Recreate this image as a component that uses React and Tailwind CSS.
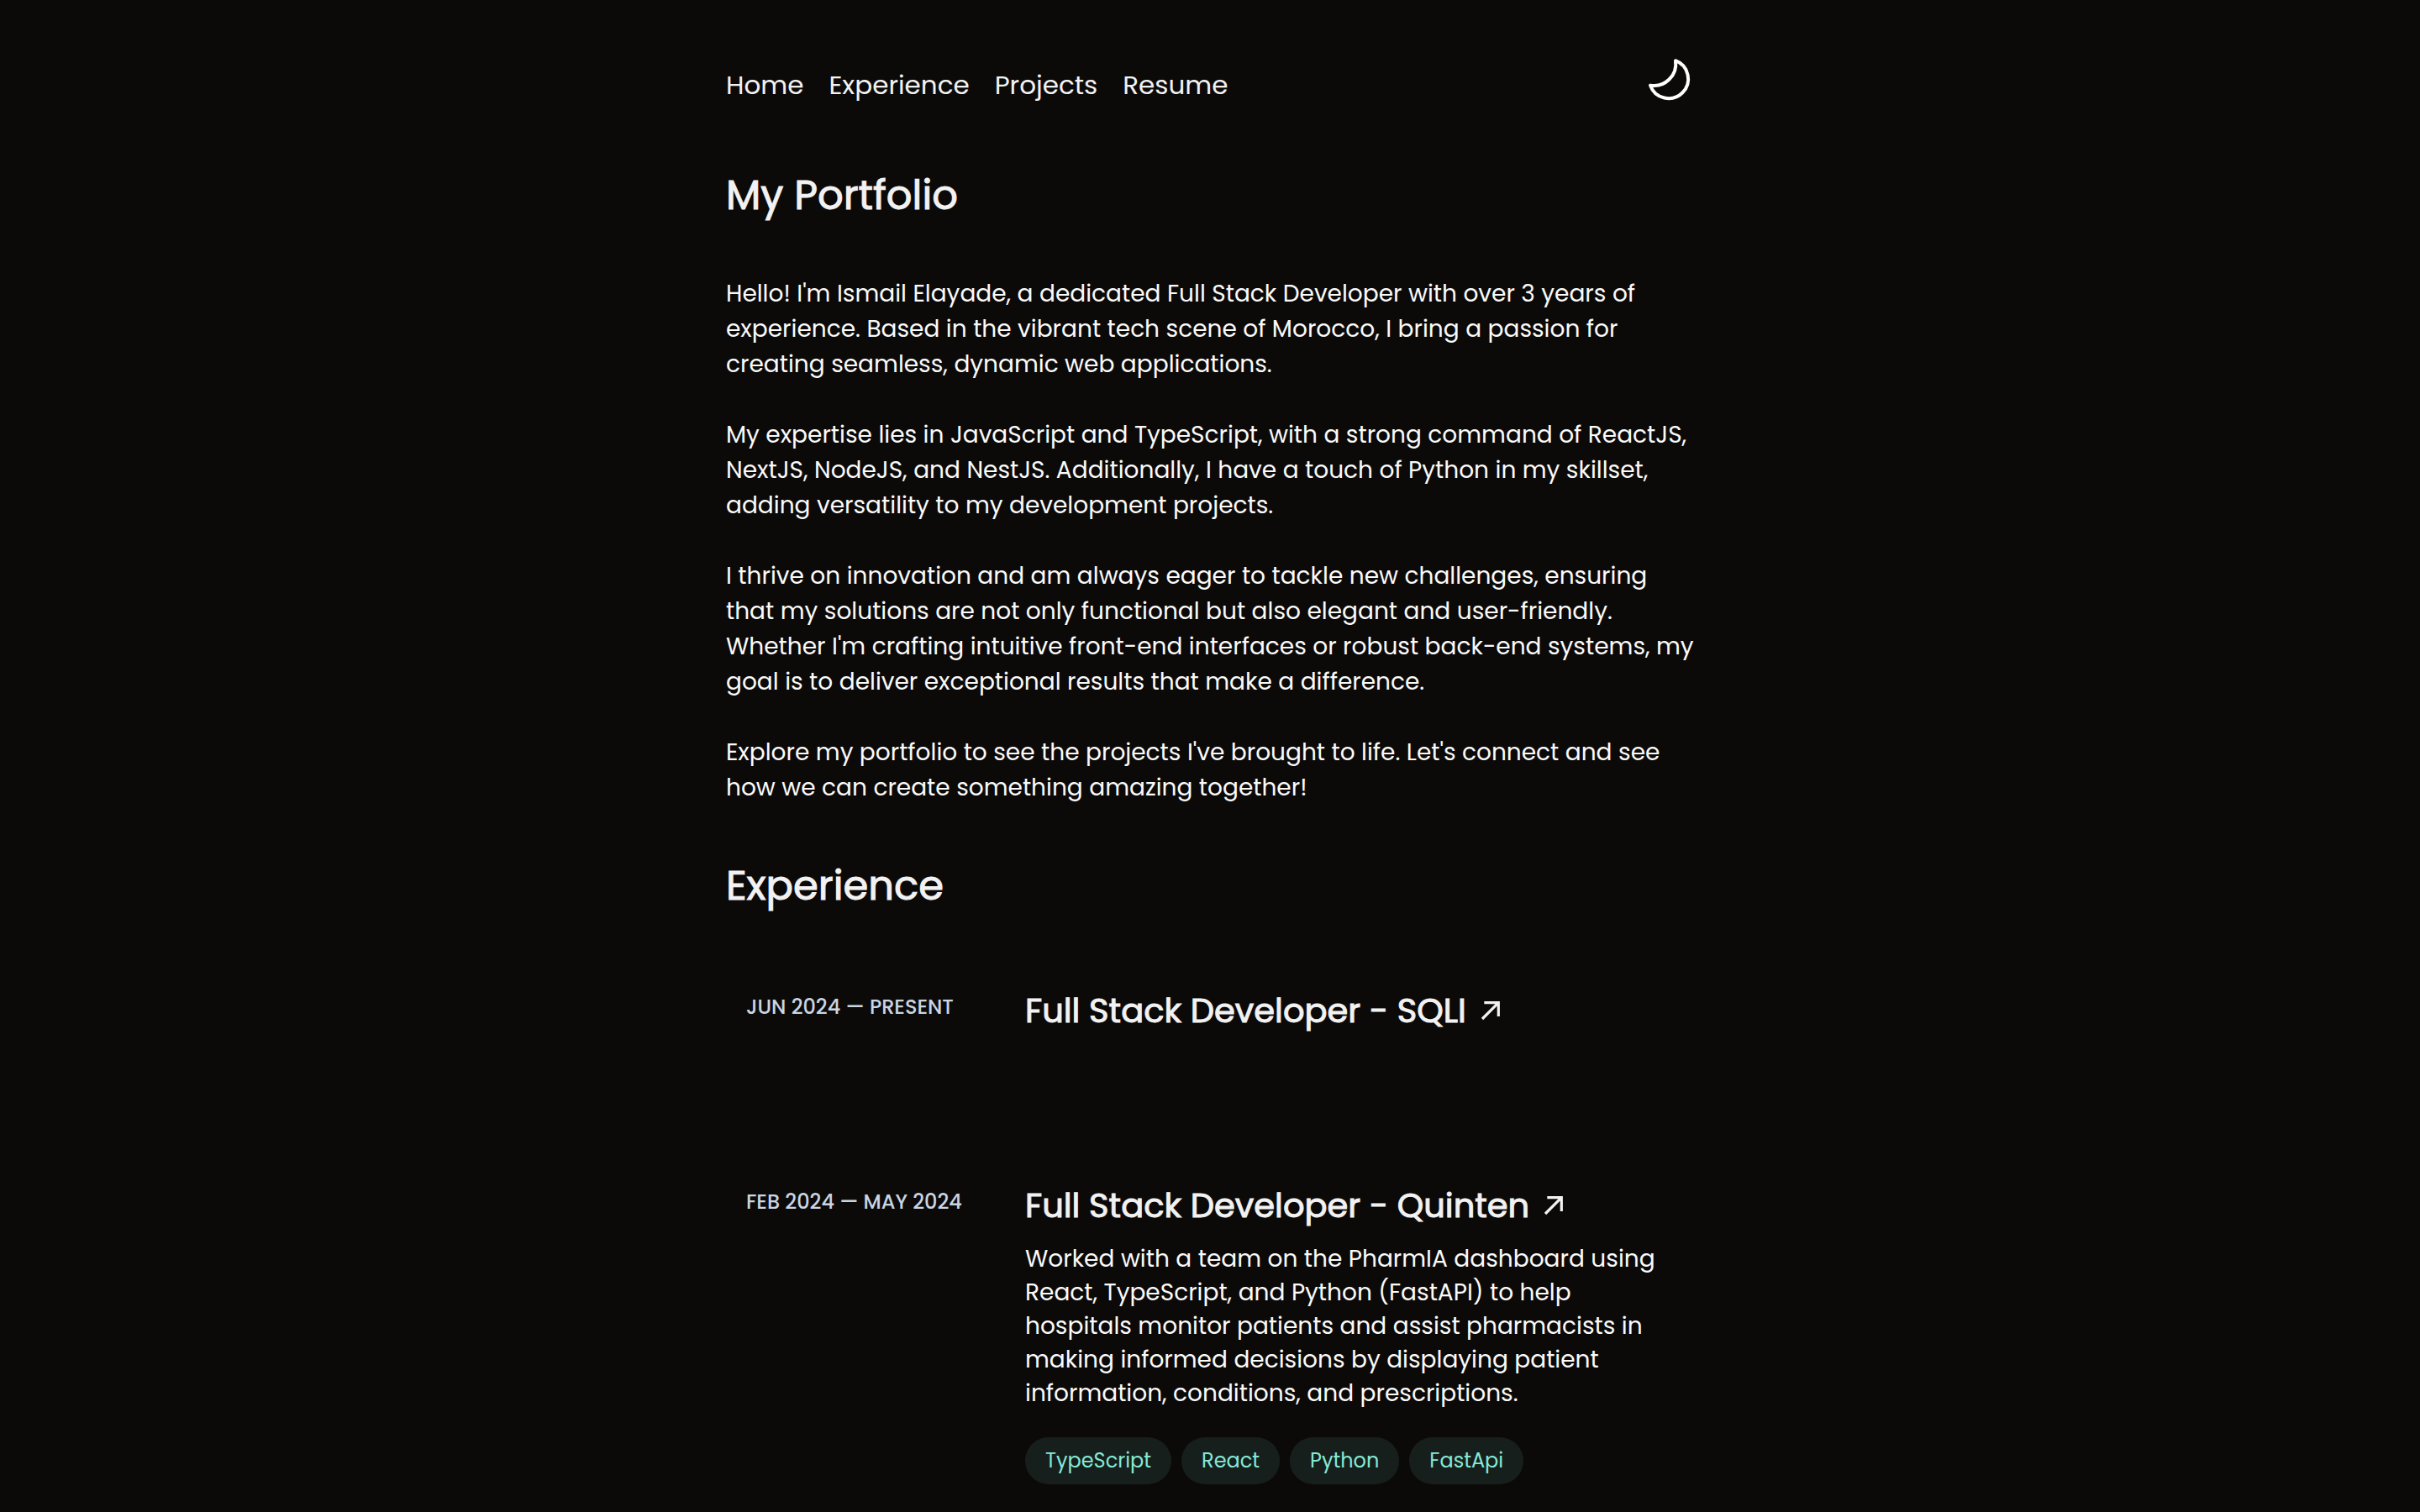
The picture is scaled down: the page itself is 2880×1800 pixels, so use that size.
import React from "react";

const navLinks = ["Home", "Experience", "Projects", "Resume"];

const intro = [
  "Hello! I'm Ismail Elayade, a dedicated Full Stack Developer with over 3 years of experience. Based in the vibrant tech scene of Morocco, I bring a passion for creating seamless, dynamic web applications.",
  "My expertise lies in JavaScript and TypeScript, with a strong command of ReactJS, NextJS, NodeJS, and NestJS. Additionally, I have a touch of Python in my skillset, adding versatility to my development projects.",
  "I thrive on innovation and am always eager to tackle new challenges, ensuring that my solutions are not only functional but also elegant and user-friendly. Whether I'm crafting intuitive front-end interfaces or robust back-end systems, my goal is to deliver exceptional results that make a difference.",
  "Explore my portfolio to see the projects I've brought to life. Let's connect and see how we can create something amazing together!",
];

const jobs = [
  { period: "Jun 2024 — Present", title: "Full Stack Developer - SQLI", tags: [] },
  {
    period: "Feb 2024 — May 2024",
    title: "Full Stack Developer - Quinten",
    description:
      "Worked with a team on the PharmIA dashboard using React, TypeScript, and Python (FastAPI) to help hospitals monitor patients and assist pharmacists in making informed decisions by displaying patient information, conditions, and prescriptions.",
    tags: ["TypeScript", "React", "Python", "FastApi"],
  },
];

function MoonIcon() {
  return (
    <svg viewBox="0 0 64 64" className="size-16" fill="none" stroke="currentColor" strokeWidth="4" strokeLinejoin="round" aria-hidden="true">
      <path d="M42 8.2A23.2 23.2 0 1 1 12 37.6A26 26 0 0 0 42 8.2Z" />
    </svg>
  );
}

function ArrowIcon() {
  return (
    <svg viewBox="0 0 32 32" className="size-8 shrink-0" fill="none" stroke="currentColor" strokeWidth="3.2" aria-hidden="true">
      <path d="M8.3 6.7H25.3V23M25.3 6.7L6 26" />
    </svg>
  );
}

function Heading({ children, as: Tag = "h2" }) {
  return <Tag className="text-5xl leading-[72px] font-normal [-webkit-text-stroke:1px_currentColor]">{children}</Tag>;
}

function Job({ job }) {
  return (
    <li className="flex min-h-[104px] gap-8 px-6">
      <p className="w-[300px] shrink-0 pt-2 text-2xl leading-9 font-medium text-slate-300 uppercase">{job.period}</p>
      <div className="flex-1">
        <h3 className="text-[40px] leading-[60px] font-normal">
          <a href="#" className="flex items-center gap-[13px]">
            <span className="[-webkit-text-stroke:1px_currentColor]">{job.title}</span>
            <ArrowIcon />
          </a>
        </h3>
        {job.description && <p className="mt-3.5 text-[28px] leading-10 text-stone-50">{job.description}</p>}
        {job.tags.length > 0 && (
          <ul className="mt-8 flex flex-wrap gap-3">
            {job.tags.map((tag) => (
              <li key={tag} className="rounded-full bg-[#171f1d] px-6 py-2 text-2xl leading-10 text-[#84e9d5]">
                {tag}
              </li>
            ))}
          </ul>
        )}
      </div>
    </li>
  );
}

export default function App() {
  return (
    <div className="h-screen overflow-hidden bg-[#0c0a09] font-['Poppins','Inter',sans-serif] text-[#f2f2f2]">
      <div className="mx-auto max-w-6xl">
        <header className="flex items-start justify-between pt-16">
          <nav className="flex gap-[30px] pt-3">
            {navLinks.map((label) => (
              <a key={label} href="#" className="text-[31px] leading-[50px]">
                {label}
              </a>
            ))}
          </nav>
          <button type="button" aria-label="Toggle theme" className="text-white">
            <MoonIcon />
          </button>
        </header>
        <main>
          <section className="mt-[69px]">
            <Heading as="h1">My Portfolio</Heading>
            <div className="mt-[60px] flex flex-col gap-[42px] text-[28px] leading-[42px] text-stone-50">
              {intro.map((text) => (
                <p key={text}>{text}</p>
              ))}
            </div>
          </section>
          <section className="mt-[60px]">
            <Heading>Experience</Heading>
            <ul className="mt-[82px] flex flex-col gap-32">
              {jobs.map((job) => (
                <Job key={job.title} job={job} />
              ))}
            </ul>
          </section>
        </main>
      </div>
    </div>
  );
}
